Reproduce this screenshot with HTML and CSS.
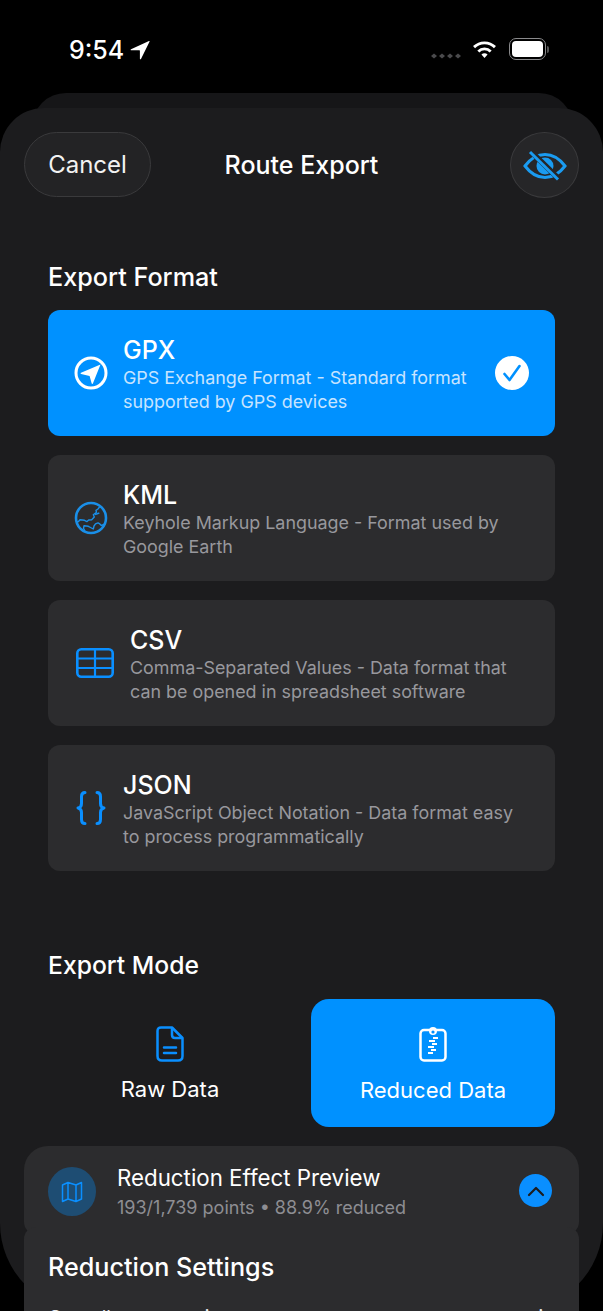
FILE: index.html
```html
<!DOCTYPE html>
<html lang="en">
<head>
<meta charset="utf-8">
<title>Route Export</title>
<link rel="stylesheet" href="styles.css">
</head>
<body>
<div class="screen">
  <div class="status">
    <div class="time"><span>9:54</span>
      <svg class="loc" viewBox="0 0 20 20"><path d="M19 1 1 9.2c-.6.3-.4 1 .2 1H9.4c.3 0 .5.2.5.5v8c0 .7.8.8 1.1.2L19.6 1.600c.2-.5-.1-.8-.6-.6z" fill="#fff"/></svg>
    </div>
    <div class="status-right">
      <svg class="cell" viewBox="0 0 30 6"><g fill="#4a4a4c"><path d="M0 3 3 .5 6 3 3 5.500z"/><path d="M8 3l3-2.500L14 3l-3 2.500z"/><path d="M16 3l3-2.500L22 3l-3 2.500z"/><path d="M24 3l3-2.500L30 3l-3 2.500z"/></g></svg>
      <svg class="wifi" viewBox="0 0 26 20"><g fill="none" stroke="#fff" stroke-width="3"><path d="M2 7.500C8 1.500 18 1.500 24 7.500"/><path d="M6.500 12c3.600-3.500 9.400-3.500 13 0"/></g><path d="M9.800 15.300c1.900-1.700 4.500-1.700 6.400 0L13 19z" fill="#fff"/></svg>
      <div class="battery"><div class="battery-fill"></div></div>
      <div class="battery-cap"></div>
    </div>
  </div>

  <div class="sheet">
    <header class="nav">
      <button class="cancel">Cancel</button>
      <h1 class="title">Route Export</h1>
      <button class="eye">
        <svg viewBox="0 0 44 32" class="eye-icon">
          <path d="M2 16C8 8 15 4.500 22 4.500S36 8 42 16c-6 8-13 11.500-20 11.500S8 24 2 16z" fill="none" stroke="#1a9bf0" stroke-width="3"/>
          <circle cx="22" cy="16" r="8.500" fill="#1a9bf0"/>
          <path d="M9 2.500 37 30" stroke="#262628" stroke-width="5.500"/>
          <path d="M7 2 35 29.500" stroke="#1a9bf0" stroke-width="3"/>
        </svg>
      </button>
    </header>

    <section class="formats">
      <h2 class="section-title">Export Format</h2>
      <div class="card-list">
        <div class="card card-on">
          <svg class="ico" viewBox="0 0 34 34"><circle cx="17" cy="17" r="15" fill="none" stroke="#fff" stroke-width="3"/><path d="M26.500 8.500 7 16.800c-.6.300-.5 1 .1 1.100l8.500 2.200 2.100 7.400c.2.600 1 .7 1.200.1z" fill="#fff"/></svg>
          <div class="card-text">
            <div class="card-name">GPX</div>
            <div class="card-desc">GPS Exchange Format - Standard format<br>supported by GPS devices</div>
          </div>
          <svg class="check" viewBox="0 0 34 34"><circle cx="17" cy="17" r="17" fill="#fff"/><path d="M9.500 18l5 6L24.500 10" fill="none" stroke="#0091ff" stroke-width="2.600" stroke-linecap="round" stroke-linejoin="round"/></svg>
        </div>
        <div class="card">
          <svg class="ico" viewBox="0 0 34 34"><circle cx="17" cy="17" r="15" fill="none" stroke="#1a8fe8" stroke-width="2.600"/><path d="M26 5.300 24 8l-2 1.300.5 2-3.200 2.400 1 2.300-2.600 2.700-3 .3-1.700 1.600-2.500-1.300L6 18.700 4.500 20.500 2 21.300M21 13.700l4.300-1.700M11 30.300l-1.500-3 .5-2.600 4.300.6 2.200 1.200 2.800 1.500.7-3 1.500-2.100 2.500-1 1.800 1 1.500 1.600 4-1.700" fill="none" stroke="#1a8fe8" stroke-width="1.400" stroke-linejoin="round"/></svg>
          <div class="card-text">
            <div class="card-name">KML</div>
            <div class="card-desc">Keyhole Markup Language - Format used by<br>Google Earth</div>
          </div>
        </div>
        <div class="card">
          <svg class="ico ico-wide" viewBox="0 0 38 30"><g fill="none" stroke="#0a8fff"><rect x="1.300" y="1.300" width="35.400" height="27.400" rx="4" stroke-width="2.600"/><path d="M1 10.500H37M1 20H37M19 1V29" stroke-width="2.200"/></g></svg>
          <div class="card-text">
            <div class="card-name">CSV</div>
            <div class="card-desc">Comma-Separated Values - Data format that<br>can be opened in spreadsheet software</div>
          </div>
        </div>
        <div class="card">
          <svg class="ico ico-brace" viewBox="0 0 30 34"><g fill="none" stroke="#0a8fff" stroke-width="3" stroke-linecap="round" stroke-linejoin="round"><path d="M9 1.500C6 1.500 5.500 3 5.500 5.500v7c0 2.500-1 4-3.500 4.500 2.500.5 3.500 2 3.500 4.500v7c0 2.500.5 4 3.500 4"/><path d="M21 1.500c3 0 3.500 1.500 3.500 4v7c0 2.500 1 4 3.500 4.500-2.500.5-3.500 2-3.500 4.500v7c0 2.500-.5 4-3.500 4"/></g></svg>
          <div class="card-text">
            <div class="card-name">JSON</div>
            <div class="card-desc">JavaScript Object Notation - Data format easy<br>to process programmatically</div>
          </div>
        </div>
      </div>
    </section>

    <section class="modes">
      <h2 class="section-title mode-title">Export Mode</h2>
      <div class="mode-row">
        <div class="mode">
          <svg class="mode-ico" viewBox="0 0 28 36"><g fill="none" stroke="#0a8fff" stroke-width="2.500" stroke-linejoin="round"><path d="M5 1.500H16L26.500 12V30c0 2.800-1.500 4.500-4.500 4.500H6c-3 0-4.500-1.700-4.500-4.500V5c0-2.300 1.200-3.500 3.500-3.500z"/><path d="M16 1.500V9c0 2 1 3 3 3h7.500"/><path d="M8 21.500H20M8 27H20" stroke-linecap="round"/></g></svg>
          <span>Raw Data</span>
        </div>
        <div class="mode mode-on">
          <svg class="mode-ico" viewBox="0 0 28 36"><rect x="1.500" y="4" width="25" height="30.500" rx="3.500" fill="none" stroke="#fff" stroke-width="2.500"/><circle cx="14" cy="5" r="4" fill="#fff"/><circle cx="14" cy="6" r="1.600" fill="#0091ff"/><path d="M14 12h5M10 15h6M13 18h5M9 21h6M12 24h5M9 27h5" stroke="#fff" stroke-width="1.800" fill="none"/></svg>
          <span>Reduced Data</span>
        </div>
      </div>
    </section>

    <div class="panels">
      <div class="preview">
        <div class="map-badge">
          <svg viewBox="0 0 24 24" class="map-ico"><path d="M2.500 5 8 2.500l8 2.500 5.500-2.500v16.500L16 21.500 8 19l-5.500 2.500zM8 2.500V19M16 5v16.500" fill="none" stroke="#0a8fff" stroke-width="1.500" stroke-linejoin="round"/></svg>
        </div>
        <div class="preview-text">
          <div class="preview-name">Reduction Effect Preview</div>
          <div class="preview-sub">193/1,739 points • 88.9% reduced</div>
        </div>
        <div class="chev"><svg viewBox="0 0 20 12"><path d="M3 10 10 3l7 7" fill="none" stroke="#1c1c1e" stroke-width="2.200" stroke-linecap="round" stroke-linejoin="round"/></svg></div>
      </div>
      <div class="settings">
        <h2 class="settings-title">Reduction Settings</h2>
        <div class="settings-row"><span>Overall compression</span><span>i</span></div>
      </div>
    </div>
  </div>
</div>
</body>
</html>
```

FILE: styles.css
```css
* { box-sizing: border-box; }
html, body { margin: 0; padding: 0; background: #000; }
body { font-family: Inter, "Liberation Sans", sans-serif; color: #fff; }
.screen { width: 603px; height: 1311px; overflow: hidden; position: relative; isolation: isolate; }

.status { height: 108px; padding: 36px 54px 0 69px; display: flex; justify-content: space-between; align-items: flex-start; }
.time { display: flex; align-items: center; gap: 6px; font-size: 25px; font-weight: 500; line-height: 28px; }
.loc { width: 20px; height: 20px; }
.status-right { display: flex; align-items: center; height: 28px; }
.cell { width: 30px; height: 6px; margin-top: 12px; }
.wifi { width: 25px; height: 19px; margin-left: 11px; margin-top: -2px; }
.battery { width: 37px; height: 22px; margin-left: 12px; margin-top: -2px; border: 1.5px solid #8a8a8c; border-radius: 7px; padding: 2px; }
.battery-fill { width: 100%; height: 100%; background: #fff; border-radius: 4px; }
.battery-cap { width: 2px; height: 7px; margin-left: 1px; margin-top: -2px; background: #555; border-radius: 0 2px 2px 0; }

.sheet { position: relative; height: 1203px; background: #1c1c1e; border-radius: 44px 44px 88px 88px; padding: 24px 24px 0; }
.sheet::before { content: ""; position: absolute; left: 32px; right: 30px; top: -15px; height: 60px; background: #161618; border-radius: 34px 34px 0 0; z-index: -1; }

.nav { display: flex; align-items: center; justify-content: space-between; height: 65px; position: relative; }
.cancel { width: 127px; height: 65px; border-radius: 33px; background: #232325; border: 1px solid #3a3a3c; color: #f2f2f2; font: 400 24px Inter, "Liberation Sans", sans-serif; padding: 0; }
.title { margin: 0; font-size: 25px; font-weight: 500; position: absolute; left: 0; right: 0; text-align: center; pointer-events: none; }
.eye { width: 69px; height: 66px; border-radius: 50%; background: #262628; border: 1px solid #3a3a3c; padding: 0; display: flex; align-items: center; justify-content: center; }
.eye-icon { width: 44px; height: 32px; margin-top: 3px; overflow: visible; }

.formats { padding: 0 24px; margin-top: 64px; }
.section-title { margin: 0; font-size: 25.2px; font-weight: 500; line-height: 32px; }
.mode-title { font-size: 24.7px; }
.card-list { display: flex; flex-direction: column; gap: 19px; margin-top: 17px; }
.card { height: 126px; border-radius: 12px; background: #2c2c2e; display: flex; align-items: center; padding: 0 27px 0 26px; }
.card-on { background: #0091ff; }
.ico { width: 34px; height: 34px; flex: none; margin-right: 15px; }
.ico-wide { width: 38px; height: 30px; margin-right: 16px; margin-left: 2px; }
.ico-brace { width: 30px; height: 34px; margin-right: 17px; margin-left: 2px; }
.card-text { flex: 1; padding-top: 3px; }
.card-name { font-size: 25px; font-weight: 500; line-height: 30px; margin-bottom: 1px; }
.card-desc { font-size: 17.9px; line-height: 24px; color: #98989d; white-space: nowrap; }
.card-on .card-desc { color: #c7e4ff; }
.check { width: 34px; height: 34px; flex: none; margin-right: -1px; }

.modes { padding: 0 24px; margin-top: 78px; }
.mode-row { display: flex; gap: 19px; margin-top: 18px; }
.mode { flex: 1; height: 128px; border-radius: 18px; display: flex; flex-direction: column; align-items: center; padding-top: 27px; font-size: 22px; font-weight: 400; }
.mode span { margin-top: 13px; line-height: 28px; }
.mode-on { background: #0091ff; }
.mode-on span { margin-top: 14px; }
.mode-ico { width: 28px; height: 36px; }

.panels { margin-top: 19px; position: relative; }
.preview { height: 88px; background: #2c2c2e; border-radius: 24px 24px 12px 12px; display: flex; align-items: flex-start; padding: 21px 20px 0 24px; }
.map-badge { width: 48px; height: 49px; border-radius: 50%; background: #1e4d73; display: flex; align-items: center; justify-content: center; flex: none; }
.map-ico { width: 24px; height: 24px; }
.preview-text { flex: 1; margin-left: 21px; margin-top: -3px; }
.preview-name { font-size: 22.3px; line-height: 28px; margin-bottom: 2.5px; }
.preview-sub { font-size: 18px; line-height: 26px; color: #8e8e93; }
.chev { width: 33px; height: 33px; border-radius: 50%; background: #0a8fff; display: flex; align-items: center; justify-content: center; margin-top: 7px; margin-right: 7px; }
.chev svg { width: 20px; height: 12px; }
.settings { position: relative; margin-top: -7px; height: 90px; background: #2c2c2e; border-radius: 12px 12px 0 0; padding: 24px 36px 0 24px; overflow: hidden; }
.settings-title { margin: 0; font-size: 25.2px; font-weight: 500; line-height: 32px; }
.settings-row { display: flex; justify-content: space-between; margin-top: 23px; font-size: 19px; color: #e5e5e7; line-height: 24px; }
```
